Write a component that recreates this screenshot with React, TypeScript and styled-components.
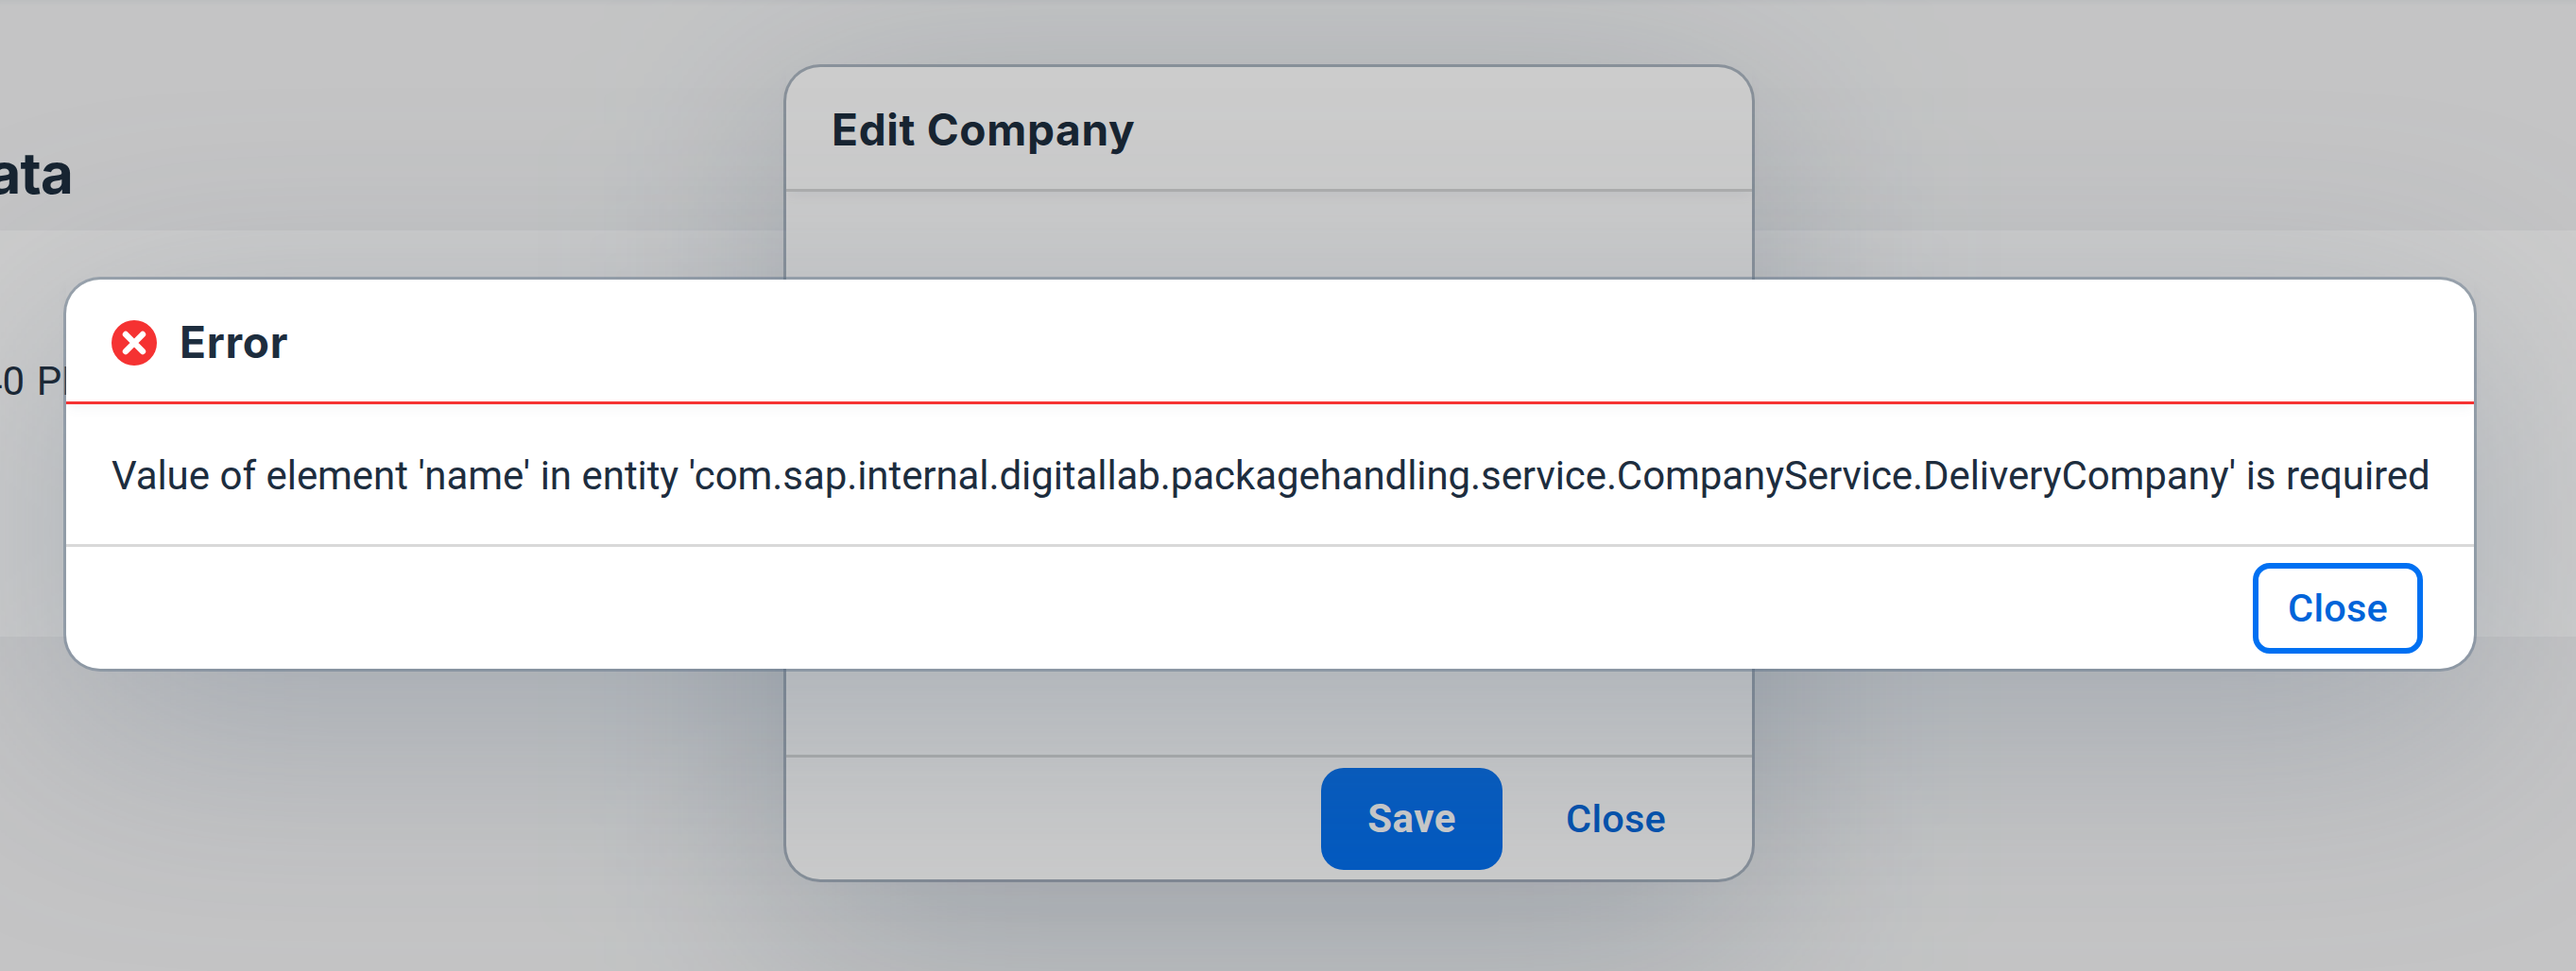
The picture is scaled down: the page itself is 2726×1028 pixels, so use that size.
import React from 'react';
import styled, { createGlobalStyle } from 'styled-components';

const Global = createGlobalStyle`
  html, body { margin: 0; height: 100%; overflow: hidden; }
  body { font-family: Roboto, "Noto Sans", sans-serif; color: #1d2d3e; }
  * { box-sizing: border-box; }
`;

const Page = styled.div`
  position: relative;
  width: 2726px;
  height: 1028px;
  overflow: hidden;
  background: #f5f6f7;
  box-shadow: inset 0 6px 4px -3px rgba(34, 53, 72, 0.04);
`;

const SectionHead = styled.header`
  height: 244px;
  padding-top: 147px;
`;

const SectionTitle = styled.h2<{ $shift: number }>`
  margin: 0 0 0 ${(p) => p.$shift}px;
  font-family: Inter, "Noto Sans", sans-serif;
  font-size: 60px;
  line-height: 72px;
  font-weight: 700;
  letter-spacing: -0.8px;
  white-space: nowrap;
`;

const SectionBody = styled.section`
  height: 430px;
  padding-top: 130px;
  background: #fff;
`;

const FieldValue = styled.p<{ $shift: number }>`
  margin: 0 0 0 ${(p) => p.$shift}px;
  font-size: 42px;
  line-height: 60px;
  word-spacing: 2px;
  white-space: nowrap;
`;

const Backdrop = styled.div`
  position: absolute;
  inset: 0;
  background: rgba(0, 0, 0, 0.2);
`;

const Dialog = styled.div<{ $x: number; $y: number; $w: number; $h: number }>`
  position: absolute;
  left: ${(p) => p.$x}px;
  top: ${(p) => p.$y}px;
  width: ${(p) => p.$w}px;
  height: ${(p) => p.$h}px;
  isolation: isolate;

  &::before {
    content: '';
    position: absolute;
    inset: 60px 0 -60px;
    z-index: -1;
    border-radius: 36px;
    background: rgba(85, 107, 130, 0.3);
    filter: blur(120px);
  }
`;

const Panel = styled.div`
  height: 100%;
  display: flex;
  flex-direction: column;
  background: #fff;
  border-radius: 36px;
  box-shadow: 0 0 0 3px rgba(85, 107, 130, 0.42);
`;

const DialogHeader = styled.div<{ $line: string }>`
  flex: none;
  height: 132px;
  display: flex;
  align-items: center;
  gap: 24px;
  padding: 4px 48px 0;
  border-bottom: 3px solid ${(p) => p.$line};
  box-shadow: 0 6px 12px -3px rgba(85, 107, 130, 0.08);
`;

const DialogTitle = styled.h1`
  margin: -2px 0 0;
  font-family: Inter, "Noto Sans", sans-serif;
  font-size: 46px;
  line-height: 60px;
  font-weight: 700;
  letter-spacing: 0.7px;
`;

const DialogBody = styled.div`
  flex: 1;
  display: flex;
  align-items: center;
  padding: 4px 48px 0;
`;

const Message = styled.p`
  margin: 0;
  font-size: 42px;
  line-height: 60px;
  letter-spacing: -0.08px;
  word-spacing: 0.3px;
  white-space: nowrap;
`;

const DialogFooter = styled.div<{ $pad: number }>`
  flex: none;
  height: 132px;
  display: flex;
  align-items: center;
  justify-content: flex-end;
  gap: 24px;
  padding: 1px ${(p) => p.$pad}px 0 0;
  border-top: 3px solid #d9d9d9;
`;

const Button = styled.button<{ $kind: 'solid' | 'plain' | 'focused' }>`
  display: flex;
  align-items: center;
  justify-content: center;
  width: ${(p) => (p.$kind === 'focused' ? 180 : 192)}px;
  height: ${(p) => (p.$kind === 'focused' ? 96 : 108)}px;
  padding: 0 0 2px;
  border: ${(p) => (p.$kind === 'focused' ? '6px solid #0070f2' : '0')};
  border-radius: ${(p) => (p.$kind === 'focused' ? 18 : 24)}px;
  background: ${(p) => (p.$kind === 'solid' ? '#0070f2' : 'transparent')};
  color: ${(p) => (p.$kind === 'solid' ? '#fff' : '#0064d9')};
  font-family: inherit;
  font-size: ${(p) => (p.$kind === 'solid' ? 42 : 41.5)}px;
  font-weight: ${(p) => (p.$kind === 'solid' ? 700 : 500)};
  letter-spacing: ${(p) => (p.$kind === 'solid' ? 0.5 : 0.2)}px;
`;

const ErrorIcon = () => (
  <svg width="48" height="48" viewBox="0 0 48 48">
    <circle cx="24" cy="24" r="24" fill="#f53232" />
    <path d="M15 15 33 33M33 15 15 33" stroke="#fff" strokeWidth="6.4" strokeLinecap="round" />
  </svg>
);

export default function App() {
  return (
    <>
      <Global />
      <Page>
        <SectionHead>
          <SectionTitle $shift={-55}>Data</SectionTitle>
        </SectionHead>
        <SectionBody>
          <FieldValue $shift={-21}>40 PM</FieldValue>
        </SectionBody>
        <Dialog $x={832} $y={71} $w={1022} $h={860}>
          <Panel>
            <DialogHeader $line="#d9d9d9">
              <DialogTitle>Edit Company</DialogTitle>
            </DialogHeader>
            <DialogBody />
            <DialogFooter $pad={48}>
              <Button $kind="solid">Save</Button>
              <Button $kind="plain">Close</Button>
            </DialogFooter>
          </Panel>
        </Dialog>
        <Backdrop />
        <Dialog $x={70} $y={296} $w={2548} $h={412}>
          <Panel>
            <DialogHeader $line="#f53232">
              <ErrorIcon />
              <DialogTitle>Error</DialogTitle>
            </DialogHeader>
            <DialogBody>
              <Message>
                Value of element 'name' in entity 'com.sap.internal.digitallab.packagehandling.service.CompanyService.DeliveryCompany' is required
              </Message>
            </DialogBody>
            <DialogFooter $pad={54}>
              <Button $kind="focused">Close</Button>
            </DialogFooter>
          </Panel>
        </Dialog>
      </Page>
    </>
  );
}
